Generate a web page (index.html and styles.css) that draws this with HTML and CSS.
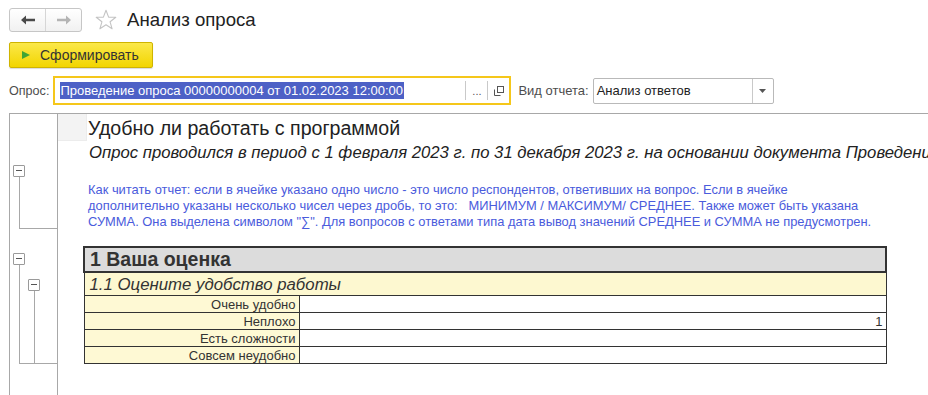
FILE: index.html
```html
<!DOCTYPE html>
<html lang="ru">
<head>
<meta charset="UTF-8">
<title>Анализ опроса</title>
<link rel="stylesheet" href="styles.css">
</head>
<body>
<div class="page">
<div class="topbar">
<div class="nav-group">
<button class="nav-btn back"><svg width="14" height="10" viewBox="0 0 14 10"><path d="M0 5 L5 0.5 L5 3.8 L14 3.8 L14 6.2 L5 6.2 L5 9.5 Z" fill="#4a4a4a"/></svg></button>
<button class="nav-btn fwd"><svg width="14" height="10" viewBox="0 0 14 10"><path d="M14 5 L9 0.5 L9 3.8 L0 3.8 L0 6.2 L9 6.2 L9 9.5 Z" fill="#b4b4b4"/></svg></button>
</div>
<svg class="star" width="22" height="22" viewBox="0 0 22 22"><path d="M11 1.2 L13.6 8.1 L20.8 8.3 L15.1 12.8 L17.1 19.8 L11 15.7 L4.9 19.8 L6.9 12.8 L1.2 8.3 L8.4 8.1 Z" fill="none" stroke="#c4c4c4" stroke-width="1.1" stroke-linejoin="round"/></svg>
<h1 class="page-title">Анализ опроса</h1>
</div>

<div class="cmdbar">
<button class="run-button"><span class="play"></span>Сформировать</button>
</div>

<div class="params">
<label class="param-label">Опрос:</label>
<div class="input-box active">
<span class="input-text"><span class="selected">Проведение опроса 00000000004 от 01.02.2023 12:00:00</span></span>
<span class="input-btn dots">...</span>
<span class="input-btn open"><svg width="10" height="10" viewBox="0 0 10 10"><rect x="3.5" y="0.5" width="6" height="6" fill="none" stroke="#555"/><path d="M0.5 3.5 V9.5 H6.5" fill="none" stroke="#555"/></svg></span>
</div>
<label class="param-label kind-label">Вид отчета:</label>
<div class="select-box">
<span class="select-text">Анализ ответов</span>
<span class="select-arrow"><svg width="7" height="4" viewBox="0 0 7 4"><path d="M0 0 H7 L3.5 4 Z" fill="#555"/></svg></span>
</div>
</div>

<div class="report">
<div class="tree">
<div class="group first">
<div class="toggle"></div>
<div class="bracket"></div>
</div>
<div class="group second">
<div class="toggle"></div>
<div class="bracket outer">
<div class="toggle nested"></div>
<div class="bracket inner"></div>
</div>
</div>
</div>

<div class="sheet">
<div class="title-row">
<div class="corner"></div>
<div class="report-title">Удобно ли работать с программой</div>
</div>
<div class="subtitle">Опрос проводился в период с 1 февраля 2023 г. по 31 декабря 2023 г. на основании документа Проведени</div>
<div class="note">
Как читать отчет: если в ячейке указано одно число - это число респондентов, ответивших на вопрос. Если в ячейке<br>
дополнительно указаны несколько чисел через дробь, то это: &nbsp; МИНИМУМ / МАКСИМУМ/ СРЕДНЕЕ. Также может быть указана<br>
СУММА. Она выделена символом "∑". Для вопросов с ответами типа дата вывод значений СРЕДНЕЕ и СУММА не предусмотрен.
</div>
<table class="answers">
<tr class="section-row"><td colspan="2">1 Ваша оценка</td></tr>
<tr class="question-row"><td colspan="2">1.1 Оцените удобство работы</td></tr>
<tr><td class="answer">Очень удобно</td><td class="value"></td></tr>
<tr><td class="answer">Неплохо</td><td class="value">1</td></tr>
<tr><td class="answer">Есть сложности</td><td class="value"></td></tr>
<tr><td class="answer">Совсем неудобно</td><td class="value"></td></tr>
</table>
</div>
</div>
</div>
</body>
</html>
```

FILE: styles.css
```css
body {
    margin: 0;
    padding: 0;
    font-family: 'Liberation Sans', Arial, sans-serif;
    color: #333;
    background-color: #fff;
    overflow: hidden;
}
.page {
    display: flex;
    flex-direction: column;
    height: 100vh;
}
.topbar {
    display: flex;
    align-items: center;
    padding: 8px 0 0 9px;
    height: 24px;
}
.nav-group {
    display: flex;
    width: 73px;
    height: 24px;
    box-sizing: border-box;
    border: 1px solid #c6c6c6;
    border-radius: 3px;
    background: linear-gradient(#ffffff, #f1f1f1);
}
.nav-btn {
    flex: 1;
    border: none;
    background: none;
    padding: 0;
    display: flex;
    align-items: center;
    justify-content: center;
}
.nav-btn.back {
    border-right: 1px solid #d6d6d6;
}
.star {
    margin-left: 13px;
}
.page-title {
    margin: 0 0 0 10px;
    font-size: 18.6px;
    font-weight: normal;
    color: #222;
}
.cmdbar {
    padding: 10px 0 0 9px;
}
.run-button {
    display: flex;
    align-items: center;
    width: 144px;
    height: 26px;
    padding: 0 0 0 12px;
    border: 1px solid #cfb400;
    border-radius: 2px;
    background: linear-gradient(#fbe84a, #f2d500);
    font-family: 'Liberation Sans', Arial, sans-serif;
    font-size: 14px;
    color: #333;
    box-shadow: 0 1px 1px rgba(0, 0, 0, 0.15);
}
.play {
    width: 0;
    height: 0;
    border-top: 4.5px solid transparent;
    border-bottom: 4.5px solid transparent;
    border-left: 8px solid #3fa535;
    margin-right: 10px;
}
.params {
    display: flex;
    align-items: center;
    padding: 8px 0 0 9px;
}
.param-label {
    font-size: 12.6px;
    color: #4d4d4d;
    margin-right: 4px;
}
.kind-label {
    margin-left: 7px;
    font-size: 13px;
}
.input-box {
    display: flex;
    align-items: stretch;
    width: 458px;
    height: 29px;
    box-sizing: border-box;
    border: 2px solid #f5c71a;
}
.input-text {
    flex: 1;
    display: flex;
    align-items: center;
    padding-left: 5px;
    font-size: 13px;
}
.selected {
    background-color: #4d61c6;
    color: #fff;
    line-height: 17px;
    padding-right: 1px;
}
.input-btn {
    display: flex;
    align-items: center;
    justify-content: center;
    width: 21px;
    margin: 3px 0;
    border-left: 1px solid #c9c9c9;
    font-size: 11px;
    color: #555;
}
.select-box {
    display: flex;
    width: 181px;
    height: 26px;
    box-sizing: border-box;
    border: 1px solid #b9b9b9;
    border-radius: 2px;
}
.select-text {
    flex: 1;
    display: flex;
    align-items: center;
    padding-left: 3px;
    font-size: 13px;
    color: #222;
}
.select-arrow {
    display: flex;
    align-items: center;
    justify-content: center;
    width: 20px;
    border-left: 1px solid #c9c9c9;
}
.report {
    flex: 1;
    display: flex;
    margin: 8px 0 0 9px;
    border-top: 1px solid #a8a8a8;
    border-left: 1px solid #a8a8a8;
    overflow: hidden;
}
.tree {
    width: 47px;
    flex: none;
    border-right: 1px solid #a8a8a8;
}
.group {
    display: flex;
    flex-direction: column;
}
.group.first {
    margin-top: 51px;
}
.group.second {
    margin-top: 24px;
}
.toggle {
    width: 12px;
    height: 12px;
    box-sizing: border-box;
    margin-left: 3px;
    border: 1px solid #9a9a9a;
    border-radius: 1px;
    background: linear-gradient(#fff 0, #fff 5px, #555 5px, #555 6px, #fff 6px);
    background-size: 6px 12px;
    background-repeat: no-repeat;
    background-position: 2px -1px;
}
.bracket {
    margin-left: 9px;
    border-left: 1px solid #a8a8a8;
    border-bottom: 1px solid #a8a8a8;
}
.group.first .bracket {
    height: 51px;
}
.bracket.outer {
    height: 98px;
    display: flex;
    flex-direction: column;
}
.toggle.nested {
    margin: 14px 0 0 8px;
}
.bracket.inner {
    flex: 1;
    margin-left: 14px;
    border-bottom: none;
}
.sheet {
    flex: 1;
    min-width: 0;
}
.title-row {
    display: flex;
    height: 27px;
}
.corner {
    width: 28px;
    background-color: #f3f3f3;
    border-right: 1px solid #ececec;
    border-bottom: 1px solid #ececec;
}
.report-title {
    padding-left: 1px;
    font-size: 19.6px;
    line-height: 29px;
    color: #222;
    white-space: nowrap;
}
.subtitle {
    margin-left: 31px;
    font-size: 16.7px;
    font-style: italic;
    line-height: 24px;
    color: #222;
    white-space: nowrap;
}
.note {
    margin: 17px 0 0 30px;
    font-size: 12.9px;
    line-height: 16px;
    color: #4a5bdc;
    white-space: nowrap;
}
.answers {
    margin: 16px 0 0 25px;
    width: 804px;
    border-collapse: collapse;
    font-size: 13px;
}
.answers td {
    border: 1px solid #333;
    padding: 0 3px;
    height: 16px;
    line-height: 15px;
}
.section-row td {
    border: 2px solid #333;
    background-color: #dcdcdc;
    font-size: 19.5px;
    font-weight: bold;
    height: 23px;
    padding-left: 5px;
}
.question-row td {
    background-color: #fdf8d0;
    font-size: 16.8px;
    font-style: italic;
    height: 22px;
    padding-left: 5px;
}
.answer {
    width: 208px;
    background-color: #fef9d4;
    text-align: right;
}
.value {
    text-align: right;
}
```
